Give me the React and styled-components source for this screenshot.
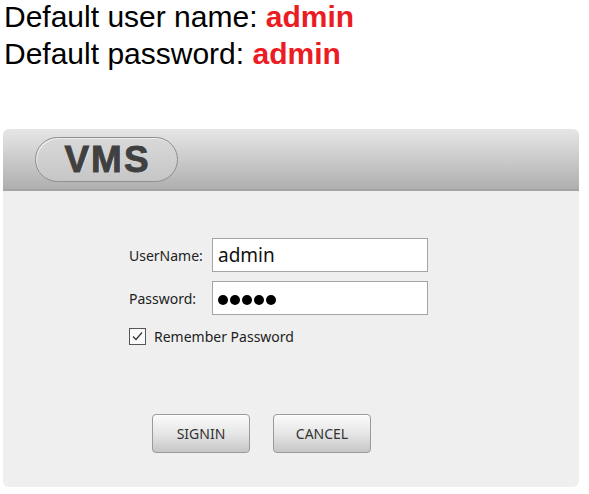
import styled, { createGlobalStyle } from "styled-components";

const GlobalStyle = createGlobalStyle`
  html, body {
    margin: 0;
    padding: 0;
    background: #ffffff;
  }
`;

const Page = styled.div`
  width: 589px;
  height: 494px;
  padding: 0 0 0 3px;
  box-sizing: border-box;
  display: flex;
  flex-direction: column;
  overflow: hidden;
`;

const Notes = styled.div`
  margin: -2px 0 0 1px;
  font-family: "Liberation Sans", Arial, sans-serif;
  font-size: 30px;
  line-height: 37px;
  color: #000;
`;

const Line = styled.div`
  white-space: nowrap;
`;

const Credential = styled.b`
  color: #ec1c24;
`;

const Panel = styled.section`
  margin-top: 57px;
  width: 576px;
  height: 358px;
  display: flex;
  flex-direction: column;
  border-radius: 6px;
  overflow: hidden;
  background: #efefef;
`;

const Header = styled.header`
  height: 62px;
  padding: 8px 0 0 32px;
  box-sizing: border-box;
  background: linear-gradient(#e6e6e6, #cbcbcb 50%, #afafaf);
  border-bottom: 2px solid #a4a4a4;
`;

const Logo = styled.div`
  width: 143px;
  height: 45px;
  box-sizing: border-box;
  border: 1px solid #8f8f8f;
  border-radius: 23px;
  background: linear-gradient(#d9d9d9, #c6c6c6);
  box-shadow: inset 1px 1px 0 rgba(255, 255, 255, 0.6);
  display: flex;
  align-items: center;
  justify-content: center;
  font-family: "Liberation Sans", Arial, sans-serif;
  font-weight: 700;
  font-size: 37px;
  letter-spacing: 2px;
  color: #404040;
  -webkit-text-stroke: 0.9px #404040;
  text-shadow: 1px 1px 0 rgba(255, 255, 255, 0.5);
  padding-left: 2px;
`;

const Body = styled.div`
  flex: 1;
  padding: 47px 0 0 126px;
  display: flex;
  flex-direction: column;
  font-family: "Noto Sans", "Open Sans", sans-serif;
  color: #1e1e1e;
`;

const FormGrid = styled.div`
  display: grid;
  grid-template-columns: 83px 216px;
  row-gap: 9px;
  align-items: center;
`;

const Label = styled.label`
  font-size: 14px;
  color: #222;
`;

const Field = styled.div`
  height: 34px;
  box-sizing: border-box;
  border: 1px solid #a5a5a5;
  background: #fff;
  display: flex;
  align-items: center;
  gap: 2px;
  padding: 0 0 0 5px;
  font-size: 19px;
  color: #111;
`;

const Dot = styled.span`
  width: 10px;
  height: 10px;
  border-radius: 50%;
  background: #000;
  margin-top: 3px;
`;

const Remember = styled.div`
  margin-top: 12px;
  display: flex;
  align-items: center;
  gap: 8px;
  font-size: 14px;
  color: #222;
`;

const Checkbox = styled.span`
  width: 17px;
  height: 17px;
  box-sizing: border-box;
  border: 1px solid #555;
  background: #fafafa;
  display: flex;
  align-items: center;
  justify-content: center;
`;

const Buttons = styled.div`
  margin: 68px 0 0 23px;
  display: flex;
  gap: 23px;
`;

const Button = styled.button`
  width: 98px;
  height: 39px;
  border: 1px solid #9a9a9a;
  border-radius: 4px;
  background: linear-gradient(#fafafa, #e6e6e6 50%, #c6c6c6);
  box-shadow: inset 0 1px 0 #fff;
  font-family: "Noto Sans", "Open Sans", sans-serif;
  font-size: 14px;
  color: #333;
  padding: 0;
`;

function CheckIcon() {
  return (
    <svg width="13" height="13" viewBox="0 0 13 13">
      <path d="M2 6.5 L5 9.5 L11 2.5" fill="none" stroke="#333" strokeWidth="1.2" />
    </svg>
  );
}

export default function App() {
  return (
    <Page>
      <GlobalStyle />
      <Notes>
        <Line>
          Default user name: <Credential>admin</Credential>
        </Line>
        <Line>
          Default password: <Credential>admin</Credential>
        </Line>
      </Notes>
      <Panel>
        <Header>
          <Logo>VMS</Logo>
        </Header>
        <Body>
          <FormGrid>
            <Label>UserName:</Label>
            <Field>admin</Field>
            <Label>Password:</Label>
            <Field>
              {[0, 1, 2, 3, 4].map((i) => (
                <Dot key={i} />
              ))}
            </Field>
          </FormGrid>
          <Remember>
            <Checkbox>
              <CheckIcon />
            </Checkbox>
            Remember Password
          </Remember>
          <Buttons>
            <Button>SIGNIN</Button>
            <Button>CANCEL</Button>
          </Buttons>
        </Body>
      </Panel>
    </Page>
  );
}
